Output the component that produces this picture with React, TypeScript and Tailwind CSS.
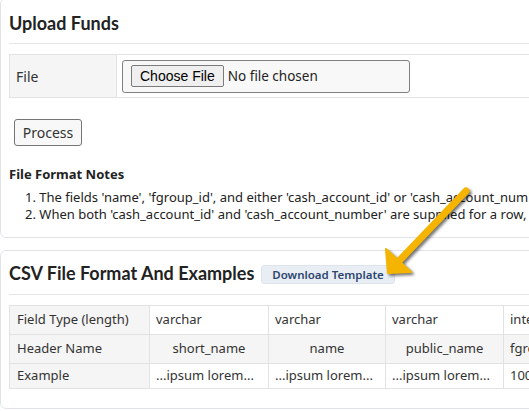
import React from "react";

const font = { fontFamily: '"Noto Sans", "Open Sans", sans-serif' };
const headFont = { fontFamily: 'Lato, "Noto Sans", sans-serif' };

function Arrow() {
  return (
    <svg className="absolute left-0 top-0 pointer-events-none" width="529" height="411">
      <defs>
        <filter id="sh" x="-20%" y="-20%" width="140%" height="140%">
          <feGaussianBlur stdDeviation="1.5" />
        </filter>
      </defs>
      <g transform="translate(2,2)" opacity="0.55" filter="url(#sh)">
        <line x1="466" y1="191" x2="399" y2="261" stroke="#000" strokeWidth="7" strokeLinecap="round" />
        <polygon points="388,273 386,249 411,272" fill="#000" strokeLinejoin="round" stroke="#000" strokeWidth="2" />
      </g>
      <line x1="466" y1="191" x2="399" y2="261" stroke="#f4b400" strokeWidth="7" strokeLinecap="round" />
      <polygon points="388,273 386,249 411,272" fill="#f4b400" strokeLinejoin="round" stroke="#f4b400" strokeWidth="2" />
    </svg>
  );
}

export default function App() {
  const cellL = "border border-[#e2e2e2] bg-[#f5f5f5] text-[13px] text-[#333] pl-[7px] pr-[6px] whitespace-nowrap";
  const cell = "border border-[#e2e2e2] text-[13px] text-[#333] pl-[6px] whitespace-nowrap";
  const cellC = "border border-[#e2e2e2] bg-[#f5f5f5] text-[13px] text-[#333] text-center whitespace-nowrap";
  return (
    <div className="relative w-[529px] h-[411px] overflow-hidden bg-white" style={font}>
      <div className="w-[640px] mt-[-2px] border border-[#e1e5ea] rounded-[6px] px-[8px] pb-[14px]">
        <h2
          className="text-[18px] font-bold text-[#222] leading-[26px] pt-[11px] pb-[7px] border-b border-[#e3e5e8]"
          style={headFont}
        >
          Upload Funds
        </h2>
        <table className="mt-[10px] w-full border-collapse">
          <tbody>
            <tr className="h-[43px]">
              <td className="w-[107px] border border-[#e2e2e2] bg-[#f5f5f5] text-[14px] text-[#333] pl-[6px]">File</td>
              <td className="border border-[#e2e2e2] pl-[5px]">
                <div className="w-[288px] h-[33px] border border-[#808080] rounded-[3px] bg-[#f8f8f8] flex items-center pl-[8px]">
                  <span
                    className="h-[22px] px-[8px] flex items-center border border-[#7a7a7a] rounded-[2px] bg-[#efefef] text-[14px] text-black"
                    style={{ fontFamily: '"Liberation Sans", Arial, sans-serif' }}
                  >
                    Choose File
                  </span>
                  <span className="ml-[4px] text-[13.5px] text-[#222]">No file chosen</span>
                </div>
              </td>
            </tr>
          </tbody>
        </table>
        <button className="mt-[21px] ml-[5px] w-[68px] h-[27px] border border-[#767676] rounded-[3px] bg-[#f8f8f8] text-[14px] text-[#333]">
          Process
        </button>
        <div className="mt-[19px] text-[13px] font-bold text-[#222] leading-[18px]">File Format Notes</div>
        <div className="mt-[6px] pl-[16px] text-[13px] text-[#222] leading-[17px] whitespace-nowrap">
          <div>1. The fields 'name', 'fgroup_id', and either 'cash_account_id' or 'cash_account_number' must be supplied.</div>
          <div>2. When both 'cash_account_id' and 'cash_account_number' are supplied for a row, the id is used.</div>
        </div>
      </div>

      <div className="w-[640px] mt-[12px] border border-[#e1e5ea] rounded-[6px] px-[8px] pb-[19px]">
        <div className="flex items-center h-[44px] border-b border-[#e3e5e8]">
          <h2 className="text-[18px] font-bold text-[#222] leading-[26px]" style={headFont}>
            CSV File Format And Examples
          </h2>
          <span className="ml-[7px] mt-[4px] h-[19px] px-[10px] flex items-center rounded-[3px] bg-[#e9eef4] border border-[#dde4ec] text-[11.5px] font-semibold text-[#2c4670]">
            Download Template
          </span>
        </div>
        <table className="mt-[10px] border-collapse">
          <tbody>
            <tr className="h-[29px]">
              <td className={cellL + " w-[140px]"}>Field Type (length)</td>
              <td className={cell + " w-[119px]"}>varchar</td>
              <td className={cell + " w-[117px]"}>varchar</td>
              <td className={cell + " w-[118px]"}>varchar</td>
              <td className={cell + " w-[118px]"}>integer</td>
            </tr>
            <tr className="h-[29px]">
              <td className={cellL}>Header Name</td>
              <td className={cellC}>short_name</td>
              <td className={cellC}>name</td>
              <td className={cellC}>public_name</td>
              <td className={cellC + " text-left pl-[6px]"}>fgroup_id</td>
            </tr>
            <tr className="h-[25px]">
              <td className={cellL}>Example</td>
              <td className={cell}>...ipsum lorem...</td>
              <td className={cell}>...ipsum lorem...</td>
              <td className={cell}>...ipsum lorem...</td>
              <td className={cell}>1000</td>
            </tr>
          </tbody>
        </table>
      </div>
      <Arrow />
    </div>
  );
}
